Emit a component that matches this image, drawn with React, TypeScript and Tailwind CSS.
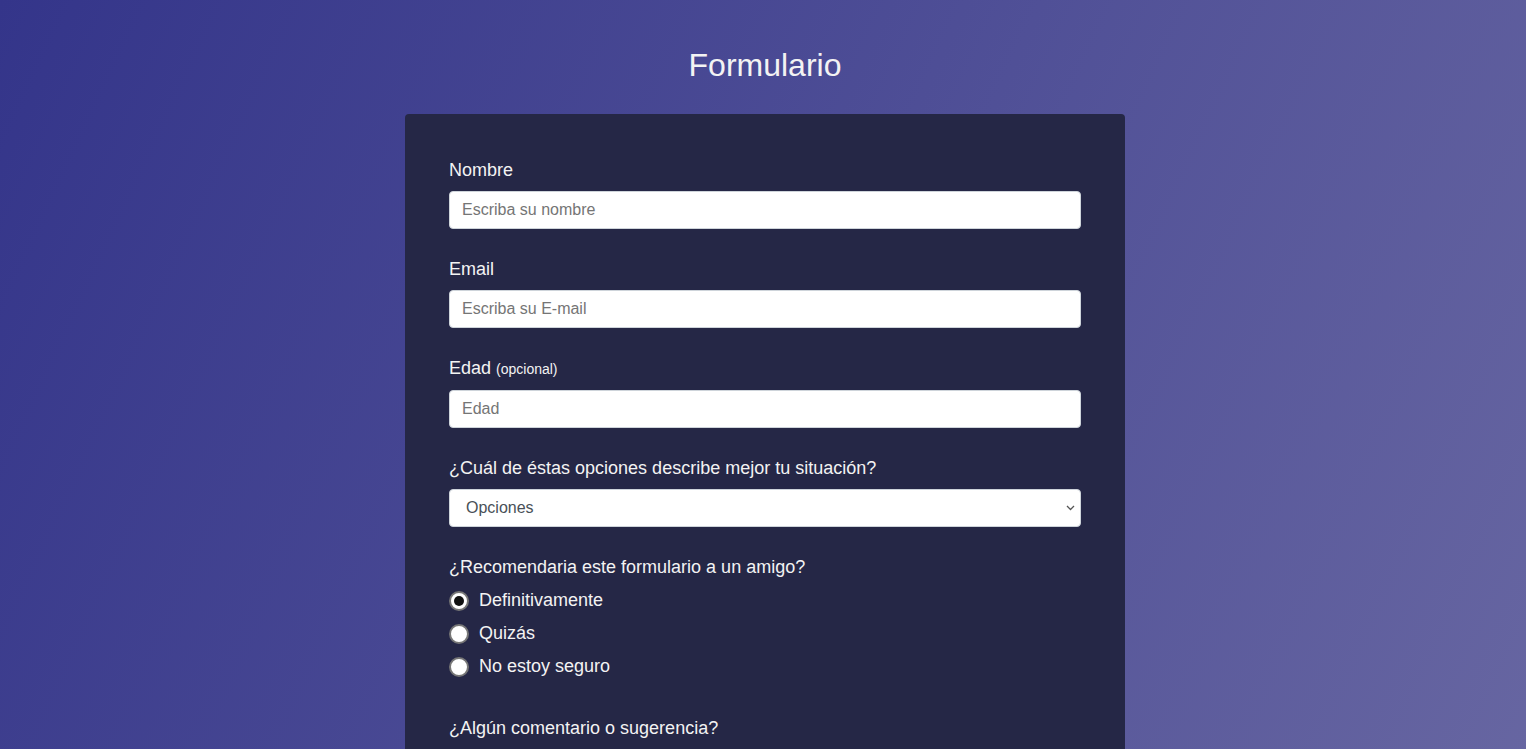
import React from 'react'

const radios = [
  { id: 'def', label: 'Definitivamente', checked: true },
  { id: 'quiz', label: 'Quizás', checked: false },
  { id: 'nose', label: 'No estoy seguro', checked: false },
]

function Radio({ checked }: { checked: boolean }) {
  return (
    <span className="mr-[10px] flex h-[20px] w-[20px] shrink-0 items-center justify-center rounded-full border-2 border-[#767676] bg-white">
      {checked && <span className="h-[10px] w-[10px] rounded-full bg-[#111]" />}
    </span>
  )
}

export default function App() {
  const inputCls =
    'block h-[38px] w-full rounded-[4px] border border-[#ced4da] bg-white px-3 text-[16px] text-[#495057] placeholder:text-[#757575] outline-none'

  return (
    <div
      className="min-h-screen bg-[linear-gradient(115deg,#34358a,#6a69a3)] pb-12 text-[#f3f3f3]"
      style={{ fontFamily: '"Liberation Sans", Arial, sans-serif' }}
    >
      <div className="mx-auto w-[724px] pl-1 pt-[46px]">
        <h1 className="mb-[30px] text-center text-[32px] leading-[38px] font-normal">Formulario</h1>

        <form className="rounded-[4px] bg-[#252746] p-10">
          {/* Nombre */}
          <div className="mb-5 p-1">
            <label className="mb-2 block text-[18px] leading-[1.4]">Nombre</label>
            <input type="text" placeholder="Escriba su nombre" className={inputCls} />
          </div>

          {/* Email */}
          <div className="mb-5 p-1">
            <label className="mb-2 block text-[18px] leading-[1.4]">Email</label>
            <input type="email" placeholder="Escriba su E-mail" className={inputCls} />
          </div>

          {/* Edad */}
          <div className="mb-5 p-1">
            <label className="mb-2 block text-[18px] leading-[1.4]">
              Edad <span className="text-[14px]">(opcional)</span>
            </label>
            <input type="number" placeholder="Edad" className={inputCls} />
          </div>

          {/* Opciones */}
          <div className="mb-5 p-1">
            <label className="mb-2 block text-[18px] leading-[1.4]">
              ¿Cuál de éstas opciones describe mejor tu situación?
            </label>
            <div className="relative">
              <select className="block h-[38px] w-full appearance-none rounded-[4px] border border-[#ced4da] bg-white pl-4 pr-6 text-[16px] text-[#495057] outline-none">
                <option>Opciones</option>
                <option>Estudiante</option>
                <option>Trabajo a tiempo completo</option>
                <option>Prefiero no decir</option>
              </select>
              <svg
                className="pointer-events-none absolute right-[6px] top-1/2 -translate-y-1/2"
                width="9"
                height="6"
                viewBox="0 0 9 6"
                fill="none"
              >
                <path d="M1 1l3.5 3.5L8 1" stroke="#555" strokeWidth="1.3" />
              </svg>
            </div>
          </div>

          {/* Radios */}
          <div className="mb-5 p-1">
            <p className="mb-2 text-[18px] leading-[1.4]">¿Recomendaria este formulario a un amigo?</p>
            {radios.map((r) => (
              <label key={r.id} className="mb-2 flex items-center text-[18px] leading-[1.4]">
                <Radio checked={r.checked} />
                {r.label}
              </label>
            ))}
          </div>

          {/* Comentarios */}
          <div className="mb-5 p-1">
            <p className="mb-2 text-[18px] leading-[1.4]">¿Algún comentario o sugerencia?</p>
            <textarea
              placeholder="Escriba sus comentarios aquí..."
              className="block min-h-[120px] w-full rounded-[4px] border border-[#ced4da] bg-white px-3 py-2 text-[16px] text-[#495057] outline-none"
            />
          </div>

          <div className="p-1">
            <button className="block w-full rounded-[4px] bg-[#37af65] py-3 text-[16px] text-white">Enviar</button>
          </div>
        </form>
      </div>
    </div>
  )
}
